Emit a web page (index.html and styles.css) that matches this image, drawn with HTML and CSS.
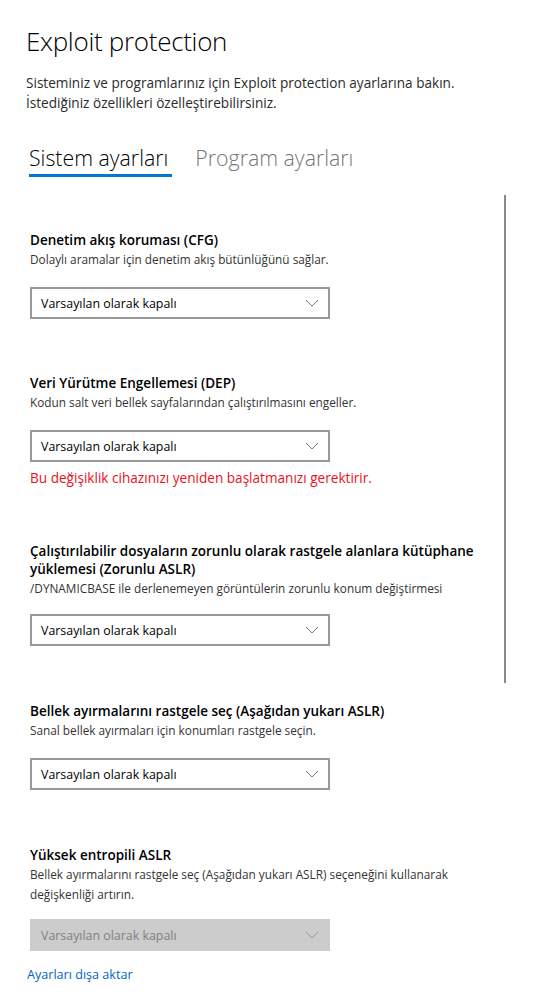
FILE: index.html
```html
<!DOCTYPE html>
<html lang="tr">

<head>
    <meta charset="UTF-8">
    <meta name="viewport" content="width=device-width, initial-scale=1.0">
    <title>Exploit protection</title>
    <link rel="stylesheet" href="styles.css">
</head>

<body>
    <div class="page">
        <!-- Başlık -->
        <h1 class="page-title">Exploit protection</h1>
        <p class="page-intro">
            Sisteminiz ve programlarınız için Exploit protection ayarlarına bakın.<br>
            İstediğiniz özellikleri özelleştirebilirsiniz.
        </p>

        <!-- Sekmeler -->
        <div class="tabs">
            <div class="tab active">Sistem ayarları</div>
            <div class="tab">Program ayarları</div>
        </div>

        <!-- Ayarlar -->
        <div class="settings-area">
            <div class="scroll-thumb"></div>

            <div class="setting">
                <div class="setting-title">Denetim akış koruması (CFG)</div>
                <div class="setting-desc">Dolaylı aramalar için denetim akış bütünlüğünü sağlar.</div>
                <div class="dropdown">
                    <span>Varsayılan olarak kapalı</span>
                    <svg class="chevron" width="14" height="8" viewBox="0 0 14 8"><path d="M1 1l6 6 6-6" /></svg>
                </div>
            </div>

            <div class="setting setting-dep">
                <div class="setting-title">Veri Yürütme Engellemesi (DEP)</div>
                <div class="setting-desc">Kodun salt veri bellek sayfalarından çalıştırılmasını engeller.</div>
                <div class="dropdown">
                    <span>Varsayılan olarak kapalı</span>
                    <svg class="chevron" width="14" height="8" viewBox="0 0 14 8"><path d="M1 1l6 6 6-6" /></svg>
                </div>
                <div class="setting-warning">Bu değişiklik cihazınızı yeniden başlatmanızı gerektirir.</div>
            </div>

            <div class="setting setting-aslr">
                <div class="setting-title">Çalıştırılabilir dosyaların zorunlu olarak rastgele alanlara kütüphane<br>yüklemesi (Zorunlu ASLR)</div>
                <div class="setting-desc">/DYNAMICBASE ile derlenemeyen görüntülerin zorunlu konum değiştirmesi</div>
                <div class="dropdown">
                    <span>Varsayılan olarak kapalı</span>
                    <svg class="chevron" width="14" height="8" viewBox="0 0 14 8"><path d="M1 1l6 6 6-6" /></svg>
                </div>
            </div>

            <div class="setting setting-bottomup">
                <div class="setting-title">Bellek ayırmalarını rastgele seç (Aşağıdan yukarı ASLR)</div>
                <div class="setting-desc">Sanal bellek ayırmaları için konumları rastgele seçin.</div>
                <div class="dropdown">
                    <span>Varsayılan olarak kapalı</span>
                    <svg class="chevron" width="14" height="8" viewBox="0 0 14 8"><path d="M1 1l6 6 6-6" /></svg>
                </div>
            </div>

            <div class="setting setting-last">
                <div class="setting-title">Yüksek entropili ASLR</div>
                <div class="setting-desc">Bellek ayırmalarını rastgele seç (Aşağıdan yukarı ASLR) seçeneğini kullanarak<br>değişkenliği artırın.</div>
                <div class="dropdown disabled">
                    <span>Varsayılan olarak kapalı</span>
                    <svg class="chevron" width="14" height="8" viewBox="0 0 14 8"><path d="M1 1l6 6 6-6" /></svg>
                </div>
            </div>
        </div>

        <a class="export-link" href="#">Ayarları dışa aktar</a>
    </div>
</body>

</html>
```

FILE: styles.css
```css
/* RESET */
* {
    margin: 0;
    padding: 0;
    box-sizing: border-box;
}

body {
    font-family: 'Open Sans', 'Noto Sans', Arial, sans-serif;
    background: #ffffff;
    color: #000000;
    overflow: hidden;
}

.page {
    padding: 22px 0 0 26px;
}

/* BAŞLIK */
.page-title {
    font-size: 26px;
    font-weight: 300;
    letter-spacing: -0.3px;
    line-height: 38px;
    color: #000000;
}

.page-intro {
    margin-top: 13px;
    font-size: 13.6px;
    line-height: 20px;
    color: #2b2b2b;
}

/* SEKMELER */
.tabs {
    display: flex;
    gap: 23px;
    margin-top: 30px;
    padding-left: 3px;
}

.tab {
    font-size: 21.3px;
    font-weight: 300;
    line-height: 30px;
    color: #767676;
    padding: 0 4px 1px 0;
    border-bottom: 3px solid transparent;
}

.tab.active {
    color: #000000;
    border-bottom-color: #0078d7;
}

/* AYARLAR */
.settings-area {
    position: relative;
    padding-left: 4px;
    width: 480px;
}

.scroll-thumb {
    position: absolute;
    left: 478px;
    top: 18px;
    width: 2px;
    height: 488px;
    background: #888888;
}

.setting {
    padding-top: 54px;
}

.setting-dep {
    padding-top: 55px;
}

.setting-bottomup,
.setting-last {
    padding-top: 56px;
}

.setting-title {
    font-size: 13.5px;
    font-weight: 600;
    line-height: 18px;
    color: #000000;
    white-space: nowrap;
}

.setting-desc {
    font-size: 11.8px;
    line-height: 20px;
    color: #333333;
    white-space: nowrap;
}

.dropdown {
    margin-top: 18px;
    width: 300px;
    height: 32px;
    border: 2px solid #999999;
    display: flex;
    align-items: center;
    justify-content: space-between;
    padding: 0 9px;
    font-size: 12.4px;
    color: #000000;
}

.setting-aslr .dropdown {
    margin-top: 16px;
}

.setting-last .dropdown {
    margin-top: 15px;
}

.chevron path {
    fill: none;
    stroke: #777777;
    stroke-width: 1;
}

.dropdown.disabled {
    background: #cccccc;
    border-color: #cccccc;
    color: #808080;
}

.dropdown.disabled .chevron path {
    stroke: #999999;
}

.setting-warning {
    margin-top: 6px;
    font-size: 13.6px;
    line-height: 20px;
    color: #e81123;
}

.export-link {
    display: inline-block;
    margin-top: 14px;
    margin-left: 1px;
    font-size: 12.6px;
    line-height: 20px;
    color: #0067c0;
    text-decoration: none;
}
```
